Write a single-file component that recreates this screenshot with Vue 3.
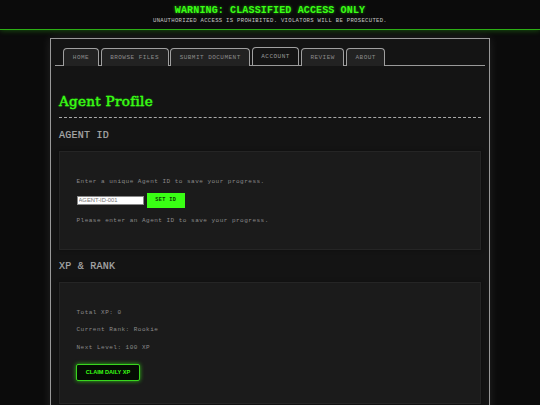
<script setup>
  import { ref } from 'vue'

  const tabs = [
    { name: 'HOME', width: 36 },
    { name: 'BROWSE FILES', width: 68 },
    { name: 'SUBMIT DOCUMENT', width: 80 },
    { name: 'ACCOUNT', width: 47.5 },
    { name: 'REVIEW', width: 43.5 },
    { name: 'ABOUT', width: 39.5 }
  ]
  const active = ref('ACCOUNT')

  const agentId = ref('')
  const message = ref('Please enter an Agent ID to save your progress.')
  const xp = ref(0)

  function setId() {
    if (agentId.value) {
      message.value = 'Agent ID set: ' + agentId.value
    }
  }

  function claimXp() {
    xp.value += 10
  }
</script>

<template>
  <div class="page">
    <header class="warning">
      <div class="warning-title">WARNING: CLASSIFIED ACCESS ONLY</div>
      <div class="warning-text">UNAUTHORIZED ACCESS IS PROHIBITED. VIOLATORS WILL BE PROSECUTED.</div>
    </header>

    <main class="folder">
      <nav class="tabs">
        <a
          v-for="t in tabs"
          :key="t.name"
          class="tab"
          :class="{ active: t.name === active }"
          :style="{ width: t.width + 'px' }"
          @click="active = t.name"
        ><span>{{ t.name }}</span></a>
      </nav>

      <div class="content">
        <h1>Agent Profile</h1>

        <h2>AGENT ID</h2>
        <section class="panel panel-id">
          <p>Enter a unique Agent ID to save your progress.</p>
          <div class="id-row">
            <input v-model="agentId" type="text" placeholder="AGENT-ID-001" />
            <button type="button" class="set" @click="setId">SET ID</button>
          </div>
          <p>{{ message }}</p>
        </section>

        <h2>XP &amp; RANK</h2>
        <section class="panel panel-xp">
          <p>Total XP: {{ xp }}</p>
          <p>Current Rank: Rookie</p>
          <p>Next Level: 100 XP</p>
          <button type="button" class="claim" @click="claimXp">CLAIM DAILY XP</button>
        </section>
      </div>
    </main>
  </div>
</template>

<style>
  body {
    margin: 0;
    background: #0b0b0b;
    overflow: hidden;
  }
</style>

<style scoped>
  * {
    box-sizing: border-box;
  }

  .page {
    height: 405px;
    overflow: hidden;
    background: #0b0b0b;
    color: #8b8b8b;
    font-family: "Liberation Mono", "Courier New", monospace;
  }

  .warning {
    position: relative;
    height: 30px;
    padding-top: 4px;
    border-bottom: 1px solid #2cae14;
    background: #0b0b0b;
    box-shadow: 0 0 6px rgba(57, 255, 20, 0.35);
    text-align: center;
    white-space: nowrap;
  }

  .warning-title {
    height: 12px;
    color: #39ff14;
    font-size: 10px;
    font-weight: bold;
    line-height: 13px;
    letter-spacing: 0.14px;
    text-shadow: 0 0 3px rgba(57, 255, 20, 0.6);
  }

  .warning-text {
    color: #c4c4c4;
    font-size: 5.6px;
    line-height: 9px;
    letter-spacing: 0.3px;
  }

  .folder {
    width: 440px;
    height: 420px;
    margin: 8px 0 0 50px;
    padding: 8px 4px 0;
    border: 1px solid #999;
    background: #141414;
    box-shadow: 0 0 10px rgba(255, 255, 255, 0.1);
  }

  .tabs {
    display: flex;
    align-items: flex-end;
    gap: 1.6px;
    height: 19px;
    padding-left: 8px;
    border-bottom: 1px solid #999;
  }

  .tab {
    display: flex;
    align-items: center;
    justify-content: center;
    flex: none;
    height: 18px;
    margin-bottom: -1px;
    border: 1px solid #a0a0a0;
    border-bottom: none;
    border-radius: 4px 4px 0 0;
    background: #222;
    color: #8b8b8b;
    font-size: 6px;
    letter-spacing: 0.47px;
    white-space: nowrap;
    cursor: pointer;
  }

  .tab.active {
    margin-bottom: 0;
    background: #141414;
    color: #999;
  }

  .content {
    padding: 25px 4px 0;
  }

  h1 {
    height: 27px;
    margin: 0;
    border-bottom: 1px dashed #aaa;
    color: #39ff14;
    font-family: "DejaVu Serif", serif;
    font-size: 13.5px;
    font-weight: normal;
    line-height: 20px;
    letter-spacing: 0.3px;
    text-shadow: 0 0 2px rgba(57, 255, 20, 0.5);
    -webkit-text-stroke: 0.4px #39ff14;
  }

  h2 {
    margin: 11px 0 9px;
    color: #aaa;
    font-size: 10px;
    font-weight: normal;
    line-height: 13px;
    letter-spacing: 0.25px;
    -webkit-text-stroke: 0.2px #aaa;
  }

  .panel {
    padding: 23.5px 16.5px 0;
    border: 1px solid #252525;
    background: #1b1b1b;
    box-shadow: 0 0 4px rgba(0, 0, 0, 0.35);
  }

  .panel-id {
    height: 99px;
  }

  .panel-id + h2 {
    margin-top: 10px;
  }

  .panel-xp {
    height: 122px;
  }

  p {
    margin: 0;
    font-size: 6px;
    line-height: 11px;
    letter-spacing: 0.49px;
  }

  .panel-xp p {
    margin-bottom: 6.5px;
  }

  .id-row {
    display: flex;
    align-items: center;
    gap: 4px;
    height: 15px;
    margin: 6px 0 7px;
  }

  input {
    width: 67px;
    height: 9px;
    padding: 0 1px;
    border: 1px solid #888;
    border-radius: 0;
    background: #fff;
    color: #111;
    font-family: "Liberation Sans", Arial, sans-serif;
    font-size: 5.8px;
    line-height: 7px;
    outline: none;
  }

  input::placeholder {
    color: #757575;
  }

  .set {
    width: 37.5px;
    height: 15px;
    margin-left: -0.5px;
    padding: 0;
    border: none;
    background: #39ff14;
    color: #0b3b04;
    font-family: inherit;
    font-size: 5.2px;
    font-weight: bold;
    letter-spacing: 0.4px;
  }

  .claim {
    display: block;
    width: 64px;
    height: 17px;
    margin-top: 11px;
    margin-left: -0.5px;
    padding: 0;
    border: 1px solid #39d51f;
    border-radius: 2px;
    background: #050c04;
    color: #39ff14;
    font-family: "Liberation Sans", Arial, sans-serif;
    font-size: 5.6px;
    font-weight: bold;
    box-shadow: 0 0 4px rgba(57, 255, 20, 0.7);
  }
</style>
